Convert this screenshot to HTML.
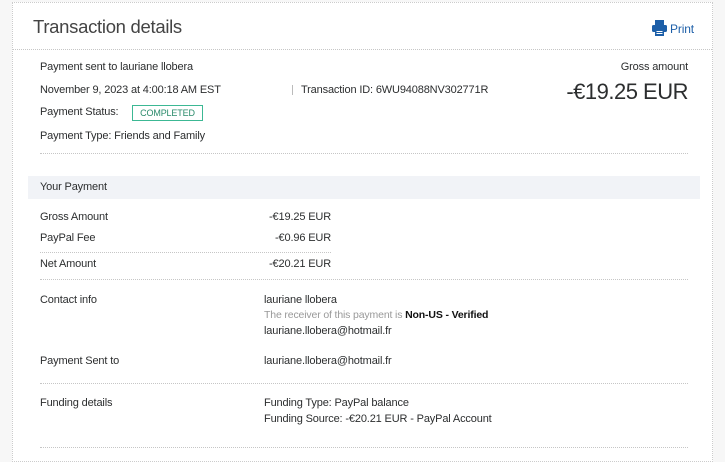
<!DOCTYPE html>
<html><head><meta charset="utf-8"><style>
*{margin:0;padding:0;box-sizing:border-box}
body{width:725px;height:448px;background:#f7f7f7;font-family:"Liberation Sans",sans-serif;color:#2c2e2f;font-size:11px;position:relative;overflow:hidden;letter-spacing:-0.15px}
.card{position:absolute;left:12px;top:2px;width:701px;height:460px;background:#fff;border:1px dotted #ccc}
.t{position:absolute;white-space:nowrap;line-height:14px}
.r{text-align:right}
.hl{position:absolute;height:0;border-top:1px dotted #c6c6c6}
</style></head><body>
<div class="card"></div>
<div class="t" style="left:33px;top:15px;font-size:18.5px;line-height:24px;color:#444;letter-spacing:-0.3px">Transaction details</div>
<svg style="position:absolute;left:652px;top:20px" width="15" height="16" viewBox="0 0 15 16"><rect x="3" y="0" width="9" height="5" fill="#1d5fa8"/><rect x="0" y="5" width="15" height="7" rx="1.5" fill="#1d5fa8"/><rect x="3" y="9" width="9" height="7" fill="#1d5fa8"/><rect x="4.5" y="11" width="6" height="1" fill="#fff"/><rect x="4.5" y="13" width="6" height="1" fill="#fff"/></svg>
<div class="t" style="left:670px;top:22px;font-size:12px;color:#1d5fa8">Print</div>
<div class="hl" style="left:13px;width:699px;top:49px"></div>

<div class="t" style="left:40px;top:60px">Payment sent to lauriane llobera</div>
<div class="t" style="left:40px;top:83px">November 9, 2023 at 4:00:18 AM EST</div>
<div style="position:absolute;left:292px;top:85px;width:1px;height:10px;background:#bbb"></div>
<div class="t" style="left:301px;top:83px">Transaction ID: 6WU94088NV302771R</div>
<div class="t" style="left:40px;top:105px">Payment Status:</div>
<div class="t" style="left:132px;top:105px;width:71px;height:16px;border:1px solid #3cb894;color:#2a8a6a;font-size:9px;line-height:14px;text-align:center">COMPLETED</div>
<div class="t" style="left:40px;top:129px">Payment Type: Friends and Family</div>
<div class="t r" style="right:37px;top:60px">Gross amount</div>
<div class="t r" style="right:37px;top:79px;font-size:22px;line-height:26px;letter-spacing:-0.5px">-€19.25 EUR</div>
<div class="hl" style="left:40px;width:648px;top:153px"></div>

<div style="position:absolute;left:28px;top:176px;width:672px;height:23px;background:#f1f3f7"></div>
<div class="t" style="left:40px;top:180px">Your Payment</div>
<div class="t" style="left:40px;top:210px">Gross Amount</div>
<div class="t r" style="right:394px;top:210px">-€19.25 EUR</div>
<div class="t" style="left:40px;top:231px">PayPal Fee</div>
<div class="t r" style="right:394px;top:231px">-€0.96 EUR</div>
<div class="hl" style="left:40px;width:291px;top:252px"></div>
<div class="t" style="left:40px;top:257px">Net Amount</div>
<div class="t r" style="right:394px;top:257px">-€20.21 EUR</div>
<div class="hl" style="left:40px;width:648px;top:279px"></div>

<div class="t" style="left:40px;top:293px">Contact info</div>
<div class="t" style="left:264px;top:293px">lauriane llobera</div>
<div class="t" style="left:264px;top:308px;font-size:10.5px;color:#999">The receiver of this payment is <b style="color:#111">Non-US - Verified</b></div>
<div class="t" style="left:264px;top:324px">lauriane.llobera@hotmail.fr</div>
<div class="t" style="left:40px;top:354px">Payment Sent to</div>
<div class="t" style="left:264px;top:354px">lauriane.llobera@hotmail.fr</div>
<div class="hl" style="left:40px;width:648px;top:383px"></div>
<div class="t" style="left:40px;top:396px">Funding details</div>
<div class="t" style="left:264px;top:396px">Funding Type: PayPal balance</div>
<div class="t" style="left:264px;top:412px">Funding Source: -€20.21 EUR - PayPal Account</div>
<div class="hl" style="left:40px;width:648px;top:447px"></div>
</body></html>
